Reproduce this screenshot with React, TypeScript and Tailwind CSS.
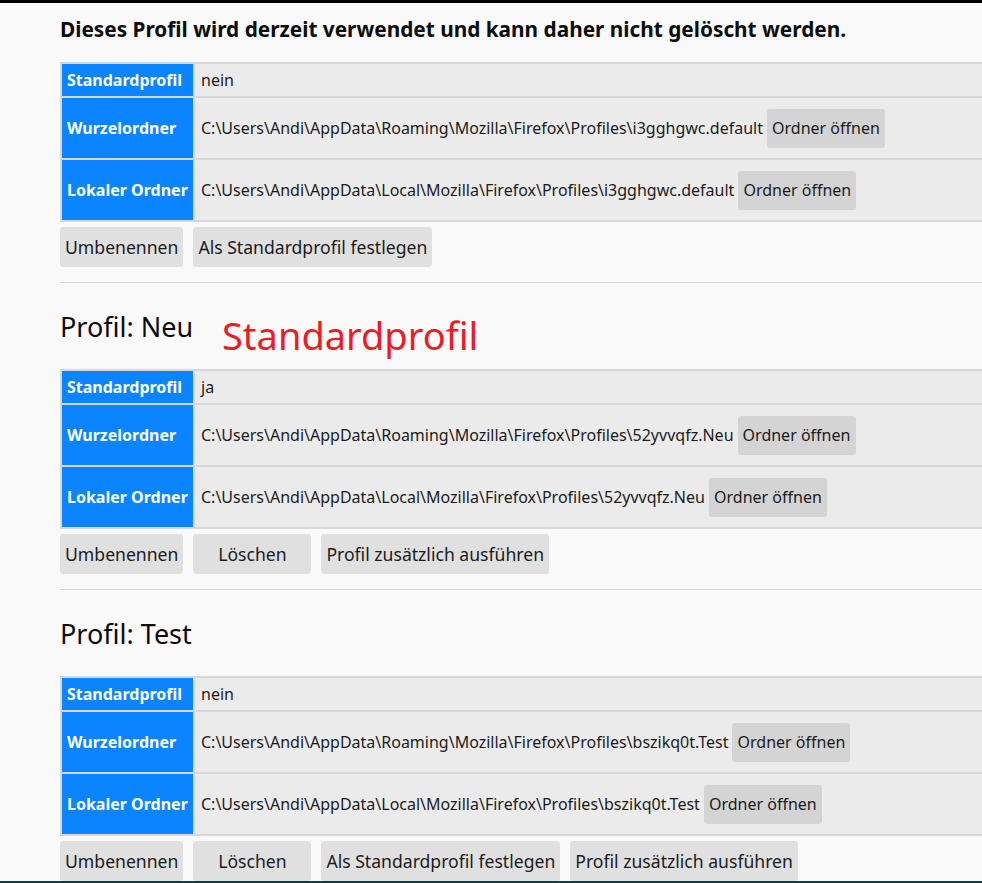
import React from "react";

type Profile = {
  title?: string;
  isDefault: boolean;
  root: string;
  local: string;
  buttons: string[];
};

const profiles: Profile[] = [
  {
    isDefault: false,
    root: "C:\\Users\\Andi\\AppData\\Roaming\\Mozilla\\Firefox\\Profiles\\i3gghgwc.default",
    local: "C:\\Users\\Andi\\AppData\\Local\\Mozilla\\Firefox\\Profiles\\i3gghgwc.default",
    buttons: ["Umbenennen", "Als Standardprofil festlegen"],
  },
  {
    title: "Profil: Neu",
    isDefault: true,
    root: "C:\\Users\\Andi\\AppData\\Roaming\\Mozilla\\Firefox\\Profiles\\52yvvqfz.Neu",
    local: "C:\\Users\\Andi\\AppData\\Local\\Mozilla\\Firefox\\Profiles\\52yvvqfz.Neu",
    buttons: ["Umbenennen", "Löschen", "Profil zusätzlich ausführen"],
  },
  {
    title: "Profil: Test",
    isDefault: false,
    root: "C:\\Users\\Andi\\AppData\\Roaming\\Mozilla\\Firefox\\Profiles\\bszikq0t.Test",
    local: "C:\\Users\\Andi\\AppData\\Local\\Mozilla\\Firefox\\Profiles\\bszikq0t.Test",
    buttons: ["Umbenennen", "Löschen", "Als Standardprofil festlegen", "Profil zusätzlich ausführen"],
  },
];

function FolderRow({ label, path }: { label: string; path: string }) {
  return (
    <tr className="h-[60px]">
      <th className="bg-[#0a84ff] text-white font-bold text-left pl-[5px] pr-[4px] w-[131px] whitespace-nowrap text-[16px]">
        {label}
      </th>
      <td className="bg-[#ebebeb] pl-[6px] text-[16px] text-[#1b1b1b] whitespace-nowrap">
        <div className="flex items-center gap-[4px]">
          <span>{path}</span>
          <button className="h-[39px] px-[5px] min-w-[118px] rounded-[3px] bg-[#d4d4d4] text-[16px] text-[#1b1b1b]">
            Ordner öffnen
          </button>
        </div>
      </td>
    </tr>
  );
}

function ProfileBlock({ p, first }: { p: Profile; first: boolean }) {
  return (
    <section className={first ? "" : "border-t border-[#d7d7db]"}>
      {first ? (
        <h3 className="h-[59px] pt-[11px] text-[20.8px] font-bold text-[#0c0c0d] leading-[30px]">
          Dieses Profil wird derzeit verwendet und kann daher nicht gelöscht werden.
        </h3>
      ) : (
        <div className="relative h-[86px]">
          <h2 className="pt-[25px] text-[27px] text-[#0c0c0d] leading-[38px]">{p.title}</h2>
          {p.isDefault && (
            <div className="absolute left-[162px] top-[28px] text-[38px] leading-[48px] text-[#ed1c24]">
              Standardprofil
            </div>
          )}
        </div>
      )}
      <table className="w-[940px] bg-[#d7d7db] border-separate border-spacing-[2px]">
        <tbody>
          <tr className="h-[32px]">
            <th className="bg-[#0a84ff] text-white font-bold text-left pl-[5px] pr-[4px] w-[131px] whitespace-nowrap text-[16px]">
              Standardprofil
            </th>
            <td className="bg-[#ebebeb] pl-[6px] text-[16px] text-[#1b1b1b]">{p.isDefault ? "ja" : "nein"}</td>
          </tr>
          <FolderRow label="Wurzelordner" path={p.root} />
          <FolderRow label="Lokaler Ordner" path={p.local} />
        </tbody>
      </table>
      <div className="flex gap-[10px] mt-[5px] mb-[15px]">
        {p.buttons.map((b) => (
          <button
            key={b}
            className="h-[40px] min-w-[118px] px-[5px] rounded-[3px] bg-[#e0e0e1] text-[17.6px] text-[#1b1b1b] whitespace-nowrap"
          >
            {b}
          </button>
        ))}
      </div>
    </section>
  );
}

export default function App() {
  return (
    <div
      className="h-[883px] w-[982px] overflow-hidden bg-[#f9f9fa] border-t-[3px] border-black border-b-2 border-b-[#123c44]"
      style={{ fontFamily: '"Noto Sans", "Open Sans", sans-serif' }}
    >
      <div className="pl-[60px] w-[1040px]">
        {profiles.map((p, i) => (
          <ProfileBlock key={i} p={p} first={i === 0} />
        ))}
      </div>
    </div>
  );
}
